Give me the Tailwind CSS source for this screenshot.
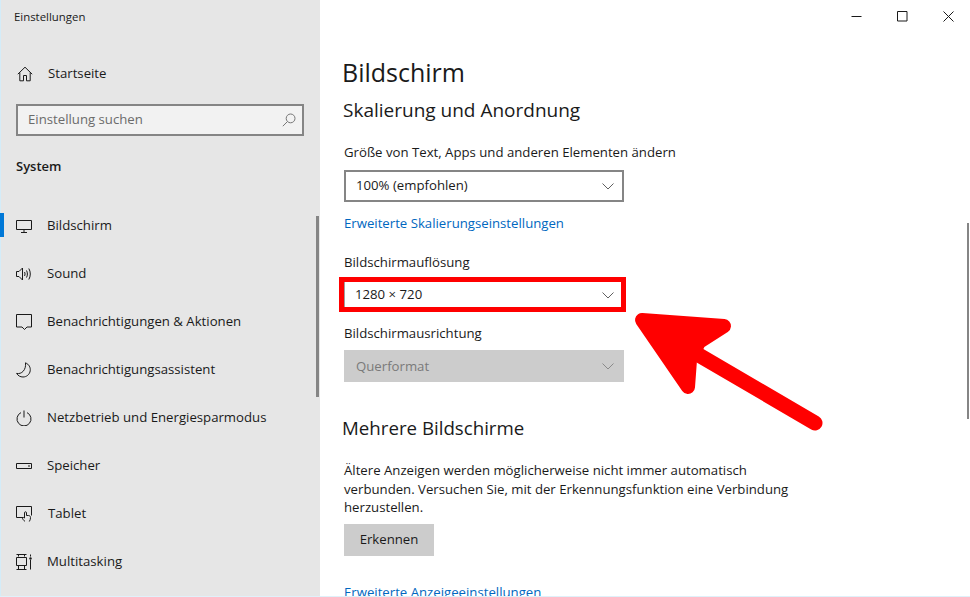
<!DOCTYPE html>
<html lang="de">
<head>
  <meta charset="UTF-8">
  <title>Einstellungen</title>
  <script src="https://cdn.jsdelivr.net/npm/@tailwindcss/browser@4"></script>
</head>
<body class="bg-white text-[#1a1a1a] font-['Open_Sans',sans-serif] overflow-hidden">
  <div class="relative flex w-[970px] h-[597px] overflow-hidden border-b border-[#dff1fa]">

    <!-- SIDEBAR -->
    <aside class="relative w-[320px] h-full shrink-0 bg-[#e6e6e6] border-l border-[#d4ecf8] pl-[14px]">
      <div class="h-[34px] pt-[9px] -ml-[1px] text-[11.4px] leading-[16px]">Einstellungen</div>

      <div class="h-[48px] mt-[16px] flex items-center">
        <svg class="w-[16px] h-[16px] ml-[2px]" viewBox="0 0 16 16" fill="none" stroke="#1a1a1a" stroke-width="1"><path d="M.8 8.2 8 1.2l7.2 7M2.8 6.5v8.3h3.7V9.5h3v5.3h3.700V6.500"/></svg>
        <span class="ml-[15px] text-[13.2px]">Startseite</span>
      </div>

      <div class="mt-[6px] w-[288px] h-[32px] ml-[1px] border-2 border-[#858585] bg-[#f2f2f2] flex items-center justify-between pl-[10px] pr-[6px]">
        <span class="text-[13.2px] text-[#6b6b6b]">Einstellung suchen</span>
        <svg class="w-[14px] h-[14px]" viewBox="0 0 14 14" fill="none" stroke="#767676" stroke-width="1"><circle cx="8.600" cy="5.400" r="4.400"/><path d="M5.400 8.600.8 13.200"/></svg>
      </div>

      <div class="mt-[20px] ml-[1px] h-[20px] text-[13px] leading-[20px] font-semibold">System</div>

      <nav class="mt-[26px] -ml-[14px]">
        <div class="relative h-[48px] flex items-center pl-[15px]">
          <span class="absolute -left-[1px] top-[11px] w-[4px] h-[24px] bg-[#0078d7]"></span>
          <svg class="w-[16px] h-[16px]" viewBox="0 0 16 16" fill="none" stroke="#1a1a1a" stroke-width="1"><path d="M.5 2.500h15v9H.5zM8 11.500v2.500M5 14.500h6"/></svg>
          <span class="ml-[15px] text-[13.2px]">Bildschirm</span>
        </div>
        <div class="h-[48px] flex items-center pl-[15px]">
          <svg class="w-[16px] h-[16px]" viewBox="0 0 16 16" fill="none" stroke="#1a1a1a" stroke-width="1"><path d="M.5 5.500h2.500l3.500-3.500v12L3 10.500H.5zM8.500 6c.7 1.200.7 2.800 0 4M10.500 4.500c1.200 2 1.200 5 0 7M12.800 2.500c2 3.200 2 7.800 0 11"/></svg>
          <span class="ml-[15px] text-[13.2px]">Sound</span>
        </div>
        <div class="h-[48px] flex items-center pl-[15px]">
          <svg class="w-[16px] h-[16px]" viewBox="0 0 16 16" fill="none" stroke="#1a1a1a" stroke-width="1"><path d="M.5 .5h15v12.500h-4.500L8.500 15.500 6 13H.5z"/></svg>
          <span class="ml-[15px] text-[13.2px]">Benachrichtigungen &amp; Aktionen</span>
        </div>
        <div class="h-[48px] flex items-center pl-[15px]">
          <svg class="w-[16px] h-[16px]" viewBox="0 0 16 16" fill="none" stroke="#1a1a1a" stroke-width="1"><path d="M9.500 .8c3.500 1.600 5.200 4.600 4.700 8-.5 3.600-3.600 6.200-7.200 6.200-2.800 0-5-1.300-6.400-3.600 4.800 1.200 9.800-3.400 8.900-10.600z"/></svg>
          <span class="ml-[15px] text-[13.2px]">Benachrichtigungsassistent</span>
        </div>
        <div class="h-[48px] flex items-center pl-[15px]">
          <svg class="w-[16px] h-[16px]" viewBox="0 0 16 16" fill="none" stroke="#1a1a1a" stroke-width="1"><path d="M8 .5v7M5 2.600a7 7 0 1 0 6 0"/></svg>
          <span class="ml-[15px] text-[13.2px]">Netzbetrieb und Energiesparmodus</span>
        </div>
        <div class="h-[48px] flex items-center pl-[15px]">
          <svg class="w-[16px] h-[16px]" viewBox="0 0 16 16" fill="none" stroke="#1a1a1a" stroke-width="1"><path d="M.5 5.500h15v5H.5zM12 8h2"/></svg>
          <span class="ml-[15px] text-[13.2px]">Speicher</span>
        </div>
        <div class="h-[48px] flex items-center pl-[15px]">
          <svg class="w-[16px] h-[16px]" viewBox="0 0 16 16" fill="none" stroke="#1a1a1a" stroke-width="1"><path d="M7 11.500H.5V.5h15v9M9 15.500c-1-1-2.500-2.200-2.500-3.200s1-1 2-.3V6.800c0-1.400 2-1.400 2 0V9.500h2c1.200 0 2 .8 2 2 0 1.500-.4 3-1.200 4"/></svg>
          <span class="ml-[16px] text-[13.2px]">Tablet</span>
        </div>
        <div class="h-[48px] flex items-center pl-[15px]">
          <svg class="w-[16px] h-[16px]" viewBox="0 0 16 16" fill="none" stroke="#1a1a1a" stroke-width="1"><path d="M.5 .5h10M.5 15.500h10M2.500 .5v2M8.500 .5v2M.5 3.500h10v8H.5zM2.500 11.500v4M8.500 11.500v4M14.500 .5v2M14.500 6v9.500"/><circle cx="14.500" cy="4.500" r="1.200" fill="#1a1a1a" stroke="none"/></svg>
          <span class="ml-[15px] text-[13.2px]">Multitasking</span>
        </div>
      </nav>

      <!-- sidebar scrollbar -->
      <span class="absolute left-[315px] top-[216px] w-[3px] h-[181px] bg-[#858585]"></span>
    </aside>

    <!-- CONTENT -->
    <main class="relative flex-1 pl-[24px] text-[13.2px]">
      <div class="absolute -right-[1px] top-0 flex">
        <button class="w-[46px] h-[32px] flex items-center justify-center"><svg class="w-[11px] h-[11px]" viewBox="0 0 11 11" stroke="#1a1a1a" fill="none"><path d="M.5 5.500h10"/></svg></button>
        <button class="w-[46px] h-[32px] flex items-center justify-center"><svg class="w-[11px] h-[11px]" viewBox="0 0 11 11" stroke="#1a1a1a" fill="none"><path d="M.5 .5h9.500v9.500H.5z"/></svg></button>
        <button class="w-[46px] h-[32px] flex items-center justify-center"><svg class="w-[11px] h-[11px]" viewBox="0 0 11 11" stroke="#1a1a1a" fill="none"><path d="M.5 .5l10 10M10.500 .5l-10 10"/></svg></button>
      </div>

      <h1 class="pt-[53px] -ml-[2px] text-[25px] leading-[38px]">Bildschirm</h1>
      <h2 class="-ml-[1px] text-[19px] leading-[36px] pt-[1px] h-[37px]">Skalierung und Anordnung</h2>

      <p class="mt-[14px] leading-[20px]">Größe von Text, Apps und anderen Elementen ändern</p>
      <div class="mt-[8px] w-[280px] h-[32px] border-2 border-[#858585] flex items-center justify-between pl-[10px] pr-[8px]">
        <span>100% (empfohlen)</span>
        <svg class="w-[12px] h-[7px]" viewBox="0 0 12 7" fill="none" stroke="#606060"><path d="M.5 .5 6 6l5.500-5.500"/></svg>
      </div>
      <a class="block mt-[12px] -translate-y-[1px] leading-[20px] text-[#0067c0]">Erweiterte Skalierungseinstellungen</a>

      <p class="mt-[18px] leading-[20px]">Bildschirmauflösung</p>
      <div class="relative mt-[7px] w-[280px] h-[32px] border-l border-[#a0a0a0] flex items-center justify-between pl-[11px] pr-[10px]">
        <span class="absolute -left-[6px] -top-[2px] w-[287px] h-[35px] border-[5px] border-[#ff0000]"></span>
        <span class="-ml-[1px]">1280 × 720</span>
        <svg class="w-[12px] h-[7px]" viewBox="0 0 12 7" fill="none" stroke="#606060"><path d="M.5 .5 6 6l5.500-5.500"/></svg>
      </div>

      <p class="mt-[12px] leading-[20px]">Bildschirmausrichtung</p>
      <div class="mt-[7px] w-[280px] h-[32px] bg-[#cccccc] flex items-center justify-between pl-[12px] pr-[10px] text-[#7a7a7a]">
        <span class="translate-y-[1px]">Querformat</span>
        <svg class="w-[12px] h-[7px]" viewBox="0 0 12 7" fill="none" stroke="#8a8a8a"><path d="M.5 .5 6 6l5.500-5.500"/></svg>
      </div>

      <h2 class="-ml-[2px] mt-[28px] text-[18.7px] leading-[36px]">Mehrere Bildschirme</h2>
      <p class="mt-[15px] w-[470px] leading-[18.5px]">Ältere Anzeigen werden möglicherweise nicht immer automatisch verbunden. Versuchen Sie, mit der Erkennungsfunktion eine Verbindung herzustellen.</p>
      <button class="block mt-[7px] w-[90px] h-[32px] bg-[#cccccc] text-center">Erkennen</button>
      <a class="block mt-[26px] leading-[20px] text-[#0067c0]">Erweiterte Anzeigeeinstellungen</a>

      <!-- content scrollbar -->
      <span class="absolute left-[647px] top-[223px] w-[2px] h-[196px] bg-[#858585]"></span>
    </main>

    <!-- annotation arrow -->
    <svg class="absolute left-0 top-0 pointer-events-none" width="970" height="597" viewBox="0 0 970 597">
      <path d="M642 320 724 326 699 342 690 360 688 387Z" fill="#ff0000" stroke="#ff0000" stroke-width="14" stroke-linejoin="round"/>
      <path d="M697 354 815 423" stroke="#ff0000" stroke-width="15" stroke-linecap="round"/>
    </svg>
  </div>
</body>
</html>
